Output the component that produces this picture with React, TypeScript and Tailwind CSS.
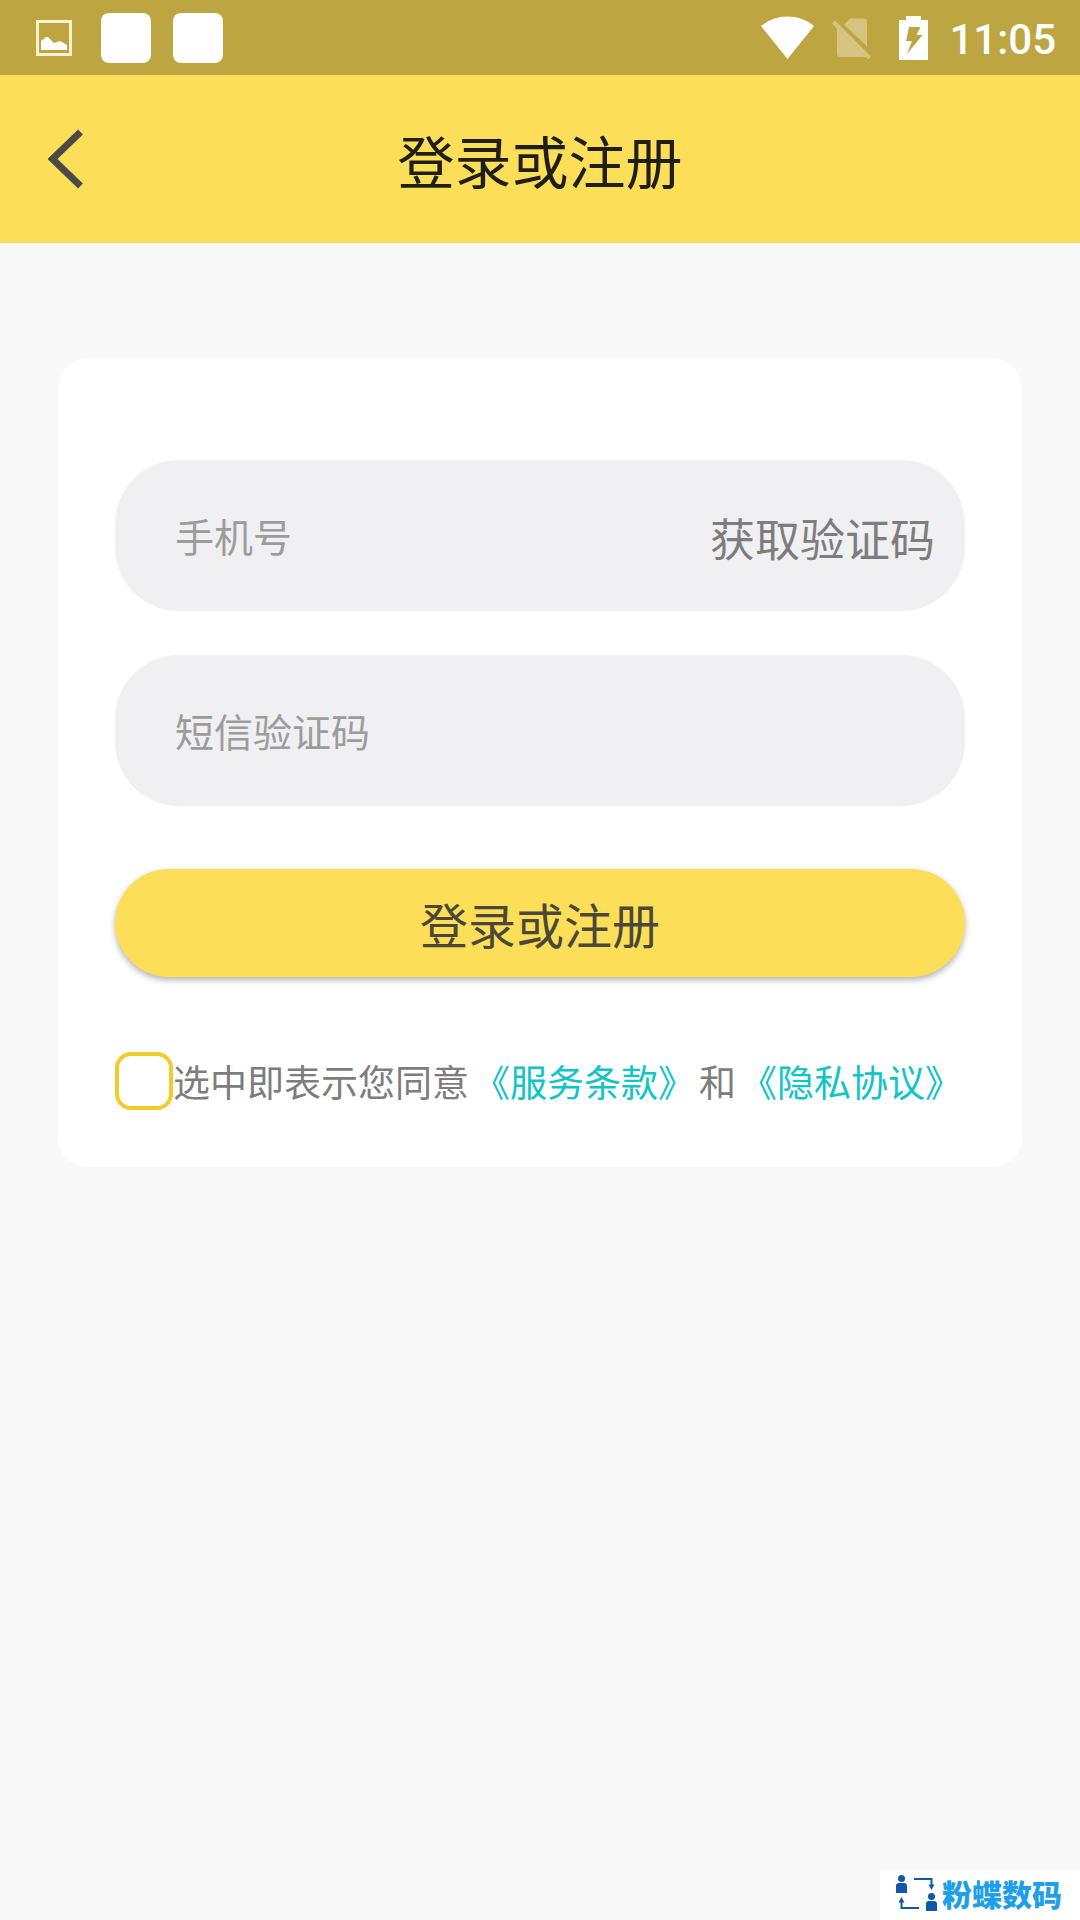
import React, { useState } from "react";

const StatusBar: React.FC = () => (
  <div className="flex h-[75px] items-center justify-between bg-[#bda642] pl-9 pr-6 text-white">
    <div className="flex items-center">
      <svg width="36" height="36" viewBox="0 0 36 36" aria-hidden="true">
        <rect x="1.5" y="1.5" width="33" height="33" fill="none" stroke="#fff3cf" strokeWidth="3" />
        <path d="M5 30V21L10 17 12 17 18 23 24 21 31 25V30Z" fill="#fff" />
      </svg>
      <span className="ml-[29px] size-[50px] rounded-lg bg-white" />
      <span className="ml-[22px] size-[50px] rounded-lg bg-white" />
    </div>
    <div className="flex items-center">
      {/* wifi */}
      <svg width="54" height="44" viewBox="0 0 54 44" aria-hidden="true">
        <path d="M1 10Q12 0.500 27.500 0.500T54 10L27.500 43Z" fill="#fff" />
      </svg>
      {/* no sim */}
      <svg className="ml-[18px]" width="40" height="44" viewBox="0 0 40 44" aria-hidden="true">
        <g fill="#d5c380">
          <path d="M12 8.500 18 2.500H32Q35 2.500 35 5.500V30.500L12 8.500Z" />
          <path d="M5 11.500 35 41H9Q5 41 5 37.500Z" />
          <path d="M0 7.500 3 4.500 39 40.500 36 43.500Z" />
        </g>
      </svg>
      {/* battery charging */}
      <svg className="ml-[27px]" width="29" height="44" viewBox="0 0 29 44" aria-hidden="true">
        <path
          d="M7 0H22V4H29V44H0V4H7ZM10 11 7 25H13L8 38 23.500 19H17.500L21.500 11Z"
          fill="#fff"
          fillRule="evenodd"
        />
      </svg>
      <span className="ml-[21px] pt-1 font-['Roboto',sans-serif] text-[42px] font-medium leading-none">
        11:05
      </span>
    </div>
  </div>
);

const Watermark: React.FC = () => (
  <div className="fixed bottom-0 right-0 flex h-[50px] w-[200px] items-center bg-white pb-1 pl-4">
    <svg width="42" height="36" viewBox="0 0 42 36" fill="#1159a8" aria-hidden="true">
      <circle cx="5.500" cy="3.500" r="3.500" />
      <path d="M0 18V11Q0 8 3 8H8Q11 8 11 11V18Z" />
      <circle cx="35.500" cy="21.500" r="3.500" />
      <path d="M30 36V29Q30 26 33 26H38Q41 26 41 29V36Z" />
      <path d="M18 4H35.500V10M23 33H5.500V27" fill="none" stroke="#1159a8" strokeWidth="2" />
      <path d="M32.500 9.500H38.500L35.500 15Z" />
      <path d="M2.500 27.500H8.500L5.500 22Z" />
    </svg>
    <span className="ml-1 whitespace-nowrap text-[30px] font-black leading-none text-[#1e9fe8]">
      粉蝶数码
    </span>
  </div>
);

const App: React.FC = () => {
  const [phone, setPhone] = useState("");
  const [code, setCode] = useState("");
  const [agreed, setAgreed] = useState(false);

  return (
    <div className="flex min-h-screen flex-col bg-[#f8f8f8] font-['Noto_Sans_CJK_SC',sans-serif]">
      <StatusBar />

      <header className="grid h-[168px] grid-cols-[1fr_auto_1fr] items-center bg-[#fdde59] px-12">
        <button type="button" aria-label="返回" className="justify-self-start">
          <svg width="36" height="60" viewBox="0 0 36 60" aria-hidden="true">
            <path d="M32.500 3 4.500 30 32.500 57" fill="none" stroke="#4b4a45" strokeWidth="7" />
          </svg>
        </button>
        <h1 className="text-[57px] leading-none text-[#1f1f16]">登录或注册</h1>
      </header>

      <main className="px-[58px] pt-[115px]">
        <form
          className="rounded-[30px] bg-white px-[57px] pb-[57px] pt-[102px]"
          onSubmit={(e) => e.preventDefault()}
        >
          <div className="flex h-[151px] items-center rounded-[64px] bg-[#f0f0f2] pl-[60px] pr-[30px]">
            <input
              type="tel"
              aria-label="手机号"
              placeholder="手机号"
              value={phone}
              onChange={(e) => setPhone(e.target.value)}
              className="min-w-0 flex-1 bg-transparent text-[39px] text-[#4b4838] outline-none placeholder:text-[#9c9c9c]"
            />
            <button type="button" className="pt-1 text-[45px] leading-none text-[#7d7d7d]">
              获取验证码
            </button>
          </div>

          <div className="mt-11 flex h-[151px] items-center rounded-[64px] bg-[#f0f0f2] px-[60px]">
            <input
              type="text"
              aria-label="短信验证码"
              placeholder="短信验证码"
              value={code}
              onChange={(e) => setCode(e.target.value)}
              className="min-w-0 flex-1 bg-transparent text-[39px] text-[#4b4838] outline-none placeholder:text-[#9c9c9c]"
            />
          </div>

          <button
            type="submit"
            className="mt-[63px] h-[108px] w-full rounded-full bg-[#fdde59] text-[48px] leading-none text-[#4b4838] shadow-[0_3px_6px_rgba(0,0,0,0.3)]"
          >
            登录或注册
          </button>

          <div className="mt-[75px] flex items-center text-[37px] leading-none text-[#7d7d7d]">
            <input
              id="agree"
              type="checkbox"
              checked={agreed}
              onChange={(e) => setAgreed(e.target.checked)}
              className="size-[58px] shrink-0 appearance-none rounded-2xl border-4 border-[#f2cc2c] bg-white checked:bg-[#fdde59]"
            />
            <div className="flex gap-1 whitespace-nowrap">
              <label htmlFor="agree">选中即表示您同意</label>
              <a href="#terms" className="text-[#10c4c8]">
                《服务条款》
              </a>
              <span>和</span>
              <a href="#privacy" className="text-[#10c4c8]">
                《隐私协议》
              </a>
            </div>
          </div>
        </form>
      </main>

      <Watermark />
    </div>
  );
};

export default App;
